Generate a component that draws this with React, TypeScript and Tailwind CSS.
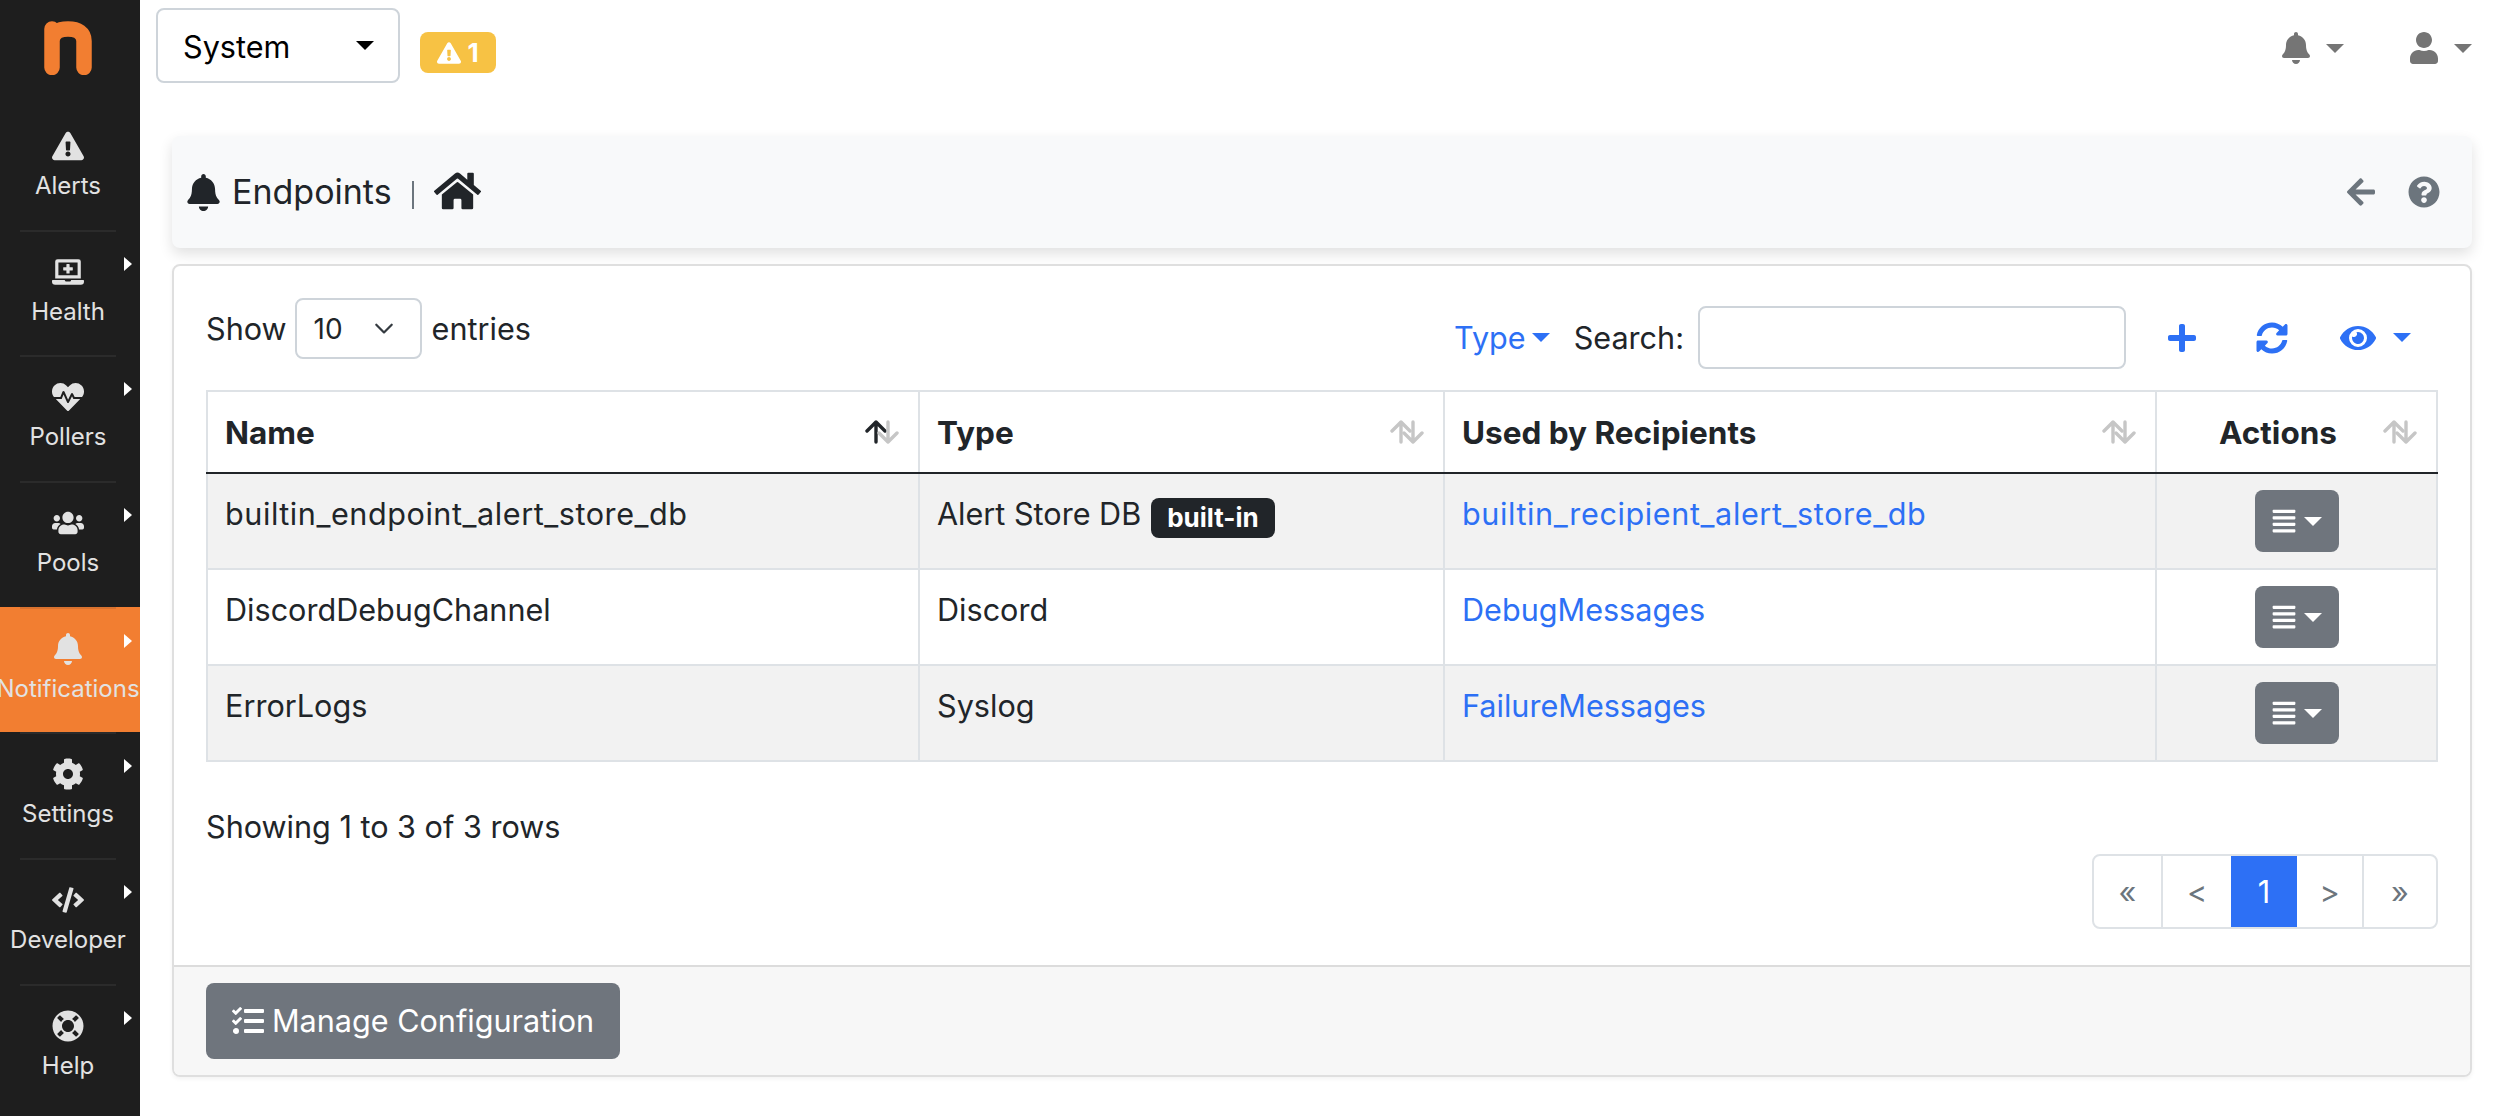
import type { ReactNode } from "react";
import {
  FaAlignJustify,
  FaArrowLeft,
  FaBell,
  FaCode,
  FaCog,
  FaExclamationTriangle,
  FaEye,
  FaHeartbeat,
  FaHome,
  FaLaptopMedical,
  FaLifeRing,
  FaPlus,
  FaQuestionCircle,
  FaSyncAlt,
  FaTasks,
  FaUser,
  FaUsers,
} from "react-icons/fa";

const navItems = [
  { label: "Alerts", icon: <FaExclamationTriangle className="h-8 w-auto" />, arrow: false },
  { label: "Health", icon: <FaLaptopMedical className="h-8 w-auto" />, arrow: true },
  { label: "Pollers", icon: <FaHeartbeat className="h-8 w-auto" />, arrow: true },
  { label: "Pools", icon: <FaUsers className="h-8 w-auto" />, arrow: true },
  { label: "Notifications", icon: <FaBell className="h-8 w-auto" />, arrow: true, active: true },
  { label: "Settings", icon: <FaCog className="h-8 w-auto" />, arrow: true },
  { label: "Developer", icon: <FaCode className="h-8 w-auto" />, arrow: true },
  { label: "Help", icon: <FaLifeRing className="h-8 w-auto" />, arrow: true },
];

const rows = [
  { name: "builtin_endpoint_alert_store_db", type: "Alert Store DB", builtin: true, recipient: "builtin_recipient_alert_store_db" },
  { name: "DiscordDebugChannel", type: "Discord", builtin: false, recipient: "DebugMessages" },
  { name: "ErrorLogs", type: "Syslog", builtin: false, recipient: "FailureMessages" },
];

const Caret = ({ className }: { className?: string }) => (
  <span className={`inline-block h-0 w-0 border-x-[9px] border-t-[9px] border-x-transparent border-t-current ${className ?? ""}`} />
);

const SortArrows = ({ active }: { active?: boolean }) => (
  <svg viewBox="0 0 36 24" className="h-6 w-9 shrink-0" fill="none" strokeWidth="3.4" strokeLinecap="round" strokeLinejoin="round">
    <path d="M12 22V2M3 11l9-9 9 9" stroke={active ? "#212529" : "#c6c6c6"} />
    <path d="M24 2v20M15 13l9 9 9-9" stroke="#c6c6c6" />
  </svg>
);

const HeaderCell = ({ children, center, active }: { children: ReactNode; center?: boolean; active?: boolean }) => (
  <th className="border-2 border-[#dee2e6] border-b-[#212529] py-0 pl-[17px] pr-[18px] text-[31.5px] font-bold">
    <div className="flex h-[80px] items-center">
      <span className={`flex-1 pt-0.5 ${center ? "text-center" : "text-left"}`}>{children}</span>
      <SortArrows active={active} />
    </div>
  </th>
);

const Sidebar = () => (
  <aside className="h-full w-[140px] shrink-0 bg-[#1e1e1e] text-[#e2e2e2]">
    <div className="h-[104px] pt-[21px]">
      <svg viewBox="0 0 48 54" className="ml-[44px] h-[54px] w-12" fill="none">
        <path d="M8 46.5V8M8 20C8 12 14 8 24 8s16 4 16 12v26.5" stroke="#f27e31" strokeWidth="15.5" strokeLinecap="round" />
      </svg>
    </div>
    {navItems.map((item, i) => (
      <div key={item.label} className={`relative h-[125.7px] pr-1 ${item.active ? "bg-[#f27e31]" : ""}`}>
        <div className={`mx-5 h-0.5 ${i === 0 ? "" : item.active ? "bg-[#d9722f]" : "bg-[#2b2b2b]"}`} />
        <div className="flex justify-center pt-6">{item.icon}</div>
        <div className="-mx-2 mt-1.5 whitespace-nowrap text-center text-[24px] leading-9">{item.label}</div>
        {item.arrow && (
          <span className="absolute left-[124px] top-[27px] h-0 w-0 border-y-[7px] border-l-[8px] border-y-transparent border-l-white" />
        )}
      </div>
    ))}
  </aside>
);

const TopBar = () => (
  <header className="flex h-[136px] shrink-0 items-start pl-4 pr-8">
    <div className="mt-2 flex h-[75px] w-[244px] items-center justify-between rounded-lg border-2 border-[#ced4da] pl-[25px] pr-[24px] text-[30.6px] text-black">
      <span className="pt-0.5">System</span>
      <Caret />
    </div>
    <div className="ml-5 mt-8 flex h-[41px] w-[76px] items-center justify-center gap-1.5 rounded-lg bg-[#f7c244] text-[26px] font-bold text-white">
      <FaExclamationTriangle className="h-6 w-auto" />
      <span>1</span>
    </div>
    <div className="ml-auto mt-8 flex items-center text-[#757575]">
      <FaBell className="h-8 w-auto" />
      <Caret className="ml-3.5" />
      <FaUser className="ml-16 h-8 w-auto" />
      <Caret className="ml-3.5" />
    </div>
  </header>
);

const TitleBar = () => (
  <div className="flex h-28 items-center rounded-lg bg-[#f8f9fa] pl-[13px] pr-8 shadow-[0_6px_14px_rgba(0,0,0,0.12)]">
    <FaBell className="h-[37px] w-auto shrink-0 text-[#212529]" />
    <span className="ml-2.5 text-[34px] text-[#212529]">Endpoints</span>
    <span className="ml-5 mt-1.5 h-7 w-0.5 bg-[#6c757d]" />
    <FaHome className="-mt-[3px] ml-5 h-[42px] w-[47px] shrink-0 text-[#212529]" />
    <FaArrowLeft className="ml-auto h-8 w-auto text-[#6c757d]" />
    <FaQuestionCircle className="ml-[31px] h-8 w-auto text-[#6c757d]" />
  </div>
);

const Toolbar = () => (
  <div className="flex h-[92px] items-start justify-between">
    <div className="flex items-center">
      <span>Show</span>
      <div className="ml-2 flex h-[61px] w-[127px] items-center justify-between rounded-lg border-2 border-[#ced4da] pl-[17px] pr-[26px] text-[28px]">
        <span>10</span>
        <svg viewBox="0 0 22 14" className="h-3 w-5" fill="none" stroke="#343a40" strokeWidth="2.6" strokeLinecap="round" strokeLinejoin="round">
          <path d="M2 2l9 9 9-9" />
        </svg>
      </div>
      <span className="ml-2.5">entries</span>
    </div>
    <div className="mr-[27px] mt-2 flex items-center">
      <span className="text-[#2d70f5]">Type</span>
      <Caret className="ml-1.5 text-[#2d70f5]" />
      <span className="ml-6">Search:</span>
      <div className="ml-3.5 h-[63px] w-[428px] rounded-lg border-2 border-[#ced4da]" />
      <div className="flex items-center text-[#2d70f5]">
        <FaPlus className="ml-[40px] h-8 w-auto" />
        <FaSyncAlt className="ml-[58px] h-8 w-auto" />
        <FaEye className="ml-[52px] h-8 w-9" />
        <Caret className="ml-[17px]" />
      </div>
    </div>
  </div>
);

const EndpointsTable = () => (
  <table className="w-[2230px] table-fixed border-collapse">
    <colgroup>
      <col className="w-[712px]" />
      <col className="w-[525px]" />
      <col className="w-[712px]" />
      <col className="w-[281px]" />
    </colgroup>
    <thead>
      <tr>
        <HeaderCell active>Name</HeaderCell>
        <HeaderCell>Type</HeaderCell>
        <HeaderCell>Used by Recipients</HeaderCell>
        <HeaderCell center>Actions</HeaderCell>
      </tr>
    </thead>
    <tbody>
      {rows.map((row, i) => (
        <tr key={row.name} className={i % 2 === 0 ? "bg-[#f2f2f2]" : "bg-white"}>
          <td className={`h-[96px] border-2 border-[#dee2e6] pb-[29px] pl-[17px] pr-[18px] pt-[19px] align-top ${row.builtin ? "tracking-[0.55px]" : ""}`}>{row.name}</td>
          <td className="border-2 border-[#dee2e6] pl-[17px] pr-[18px] pt-[19px] align-top">
            <span>{row.type}</span>
            {row.builtin && (
              <span className="ml-2.5 inline-block rounded-lg bg-[#212529] px-4 py-[5px] align-[-2px] text-[26px] font-bold leading-[30px] text-white">built-in</span>
            )}
          </td>
          <td className={`border-2 border-[#dee2e6] pl-[17px] pr-[18px] pt-[19px] align-top text-[#2d70f5] ${row.builtin ? "tracking-[0.6px]" : ""}`}>{row.recipient}</td>
          <td className="border-2 border-[#dee2e6] align-top">
            <div className="mx-auto mt-4 flex h-[62px] w-[84px] items-center justify-center gap-[7px] rounded-lg bg-[#6f757d] text-white">
              <FaAlignJustify className="h-[26px] w-auto" />
              <Caret className="border-x-[8px] border-t-[8px]" />
            </div>
          </td>
        </tr>
      ))}
    </tbody>
  </table>
);

const Pagination = () => (
  <div className="mt-[6px] flex justify-end">
    <div className="flex h-[75px] overflow-hidden rounded-lg border-2 border-[#dee2e6] text-[#6c757d]">
      <span className="flex w-[69px] items-center justify-center border-r-2 border-[#dee2e6]">«</span>
      <span className="flex w-[68px] items-center justify-center">&lt;</span>
      <span className="-my-0.5 flex w-[66px] items-center justify-center bg-[#2d70f5] text-white">1</span>
      <span className="flex w-[67px] items-center justify-center border-r-2 border-[#dee2e6]">&gt;</span>
      <span className="flex w-[72px] items-center justify-center">»</span>
    </div>
  </div>
);

export default function App() {
  return (
    <div className="flex h-screen w-full overflow-hidden bg-white [font-family:Inter,sans-serif] text-[30.6px] leading-[42px] text-[#212529]">
      <Sidebar />
      <main className="flex min-w-0 flex-1 flex-col">
        <TopBar />
        <div className="pl-8 pr-8">
          <TitleBar />
          <section className="mt-4 overflow-hidden rounded-lg border-2 border-[#dfdfdf] shadow-[0_2px_4px_rgba(0,0,0,0.05)]">
            <div className="px-8 pb-[36px] pt-8">
              <Toolbar />
              <EndpointsTable />
              <div className="mt-[44px]">Showing 1 to 3 of 3 rows</div>
              <Pagination />
            </div>
            <div className="h-[110px] border-t-2 border-[#dcdcdc] bg-[#f7f7f7] px-8 pt-4">
              <button className="flex h-[76px] w-[414px] items-center justify-center gap-2 rounded-lg bg-[#6f757d] text-white">
                <FaTasks className="h-8 w-auto" />
                Manage Configuration
              </button>
            </div>
          </section>
        </div>
      </main>
    </div>
  );
}
